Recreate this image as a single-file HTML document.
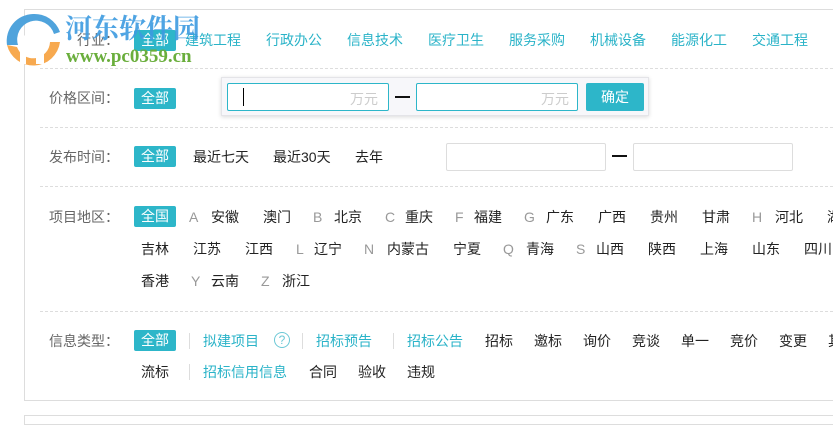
<!DOCTYPE html>
<html><head><meta charset="utf-8"><style>
*{margin:0;padding:0;box-sizing:border-box}
body{width:833px;height:418px;overflow:hidden;background:#fff;position:relative;font-family:"Liberation Sans","Noto Sans CJK SC",sans-serif;font-size:14px;color:#222}
.a{position:absolute;line-height:20px;white-space:nowrap}
.l{color:#666}
.t{color:#2ab3c8}
.g{color:#999}
.tag{position:absolute;background:#2db6c9;color:#fff;width:42px;height:21px;line-height:21px;text-align:center;border-radius:2px}
.dl{position:absolute;left:40px;right:0;border-top:1px dashed #ddd;height:0}
.sep{position:absolute;width:1px;height:16px;background:#ddd}
.in{position:absolute;border:1px solid #ddd;background:#fff;border-radius:2px}
</style></head><body>
<div style="position:absolute;left:24px;top:9px;width:820px;height:392px;border:1px solid #ddd;border-right:none"></div>
<div style="position:absolute;left:24px;top:415px;width:820px;height:10px;border:1px solid #ddd"></div>
<div class="dl" style="top:68px"></div>
<div class="dl" style="top:127px"></div>
<div class="dl" style="top:186px"></div>
<div class="dl" style="top:311px"></div>

<span class="a l" style="left:77px;top:30px">行业：</span>
<div class="tag" style="left:134px;top:30px">全部</div>
<span class="a t" style="left:185px;top:30px">建筑工程</span>
<span class="a t" style="left:266px;top:30px">行政办公</span>
<span class="a t" style="left:347px;top:30px">信息技术</span>
<span class="a t" style="left:428px;top:30px">医疗卫生</span>
<span class="a t" style="left:509px;top:30px">服务采购</span>
<span class="a t" style="left:590px;top:30px">机械设备</span>
<span class="a t" style="left:671px;top:30px">能源化工</span>
<span class="a t" style="left:752px;top:30px">交通工程</span>

<span class="a l" style="left:49px;top:88px">价格区间：</span>
<div class="tag" style="left:134px;top:88px">全部</div>
<div style="position:absolute;left:221px;top:77px;width:428px;height:39px;background:#f7f7fa;border:1px solid #e4e4e8;box-shadow:0 1px 4px rgba(0,0,0,.15)"></div>
<div class="in" style="left:227px;top:83px;width:162px;height:28px;border-color:#2db6c9"></div>
<div style="position:absolute;left:243px;top:88px;width:1px;height:18px;background:#000"></div>
<span class="a" style="left:350px;top:89px;color:#ccc">万元</span>
<div style="position:absolute;left:395px;top:96px;width:15px;height:2px;background:#111"></div>
<div class="in" style="left:416px;top:83px;width:162px;height:28px;border-color:#2db6c9"></div>
<span class="a" style="left:541px;top:89px;color:#ccc">万元</span>
<div style="position:absolute;left:586px;top:83px;width:58px;height:28px;background:#2db6c9;color:#fff;line-height:28px;text-align:center;border-radius:2px">确定</div>

<span class="a l" style="left:49px;top:147px">发布时间：</span>
<div class="tag" style="left:134px;top:146px">全部</div>
<span class="a" style="left:193px;top:147px">最近七天</span>
<span class="a" style="left:273px;top:147px">最近30天</span>
<span class="a" style="left:355px;top:147px">去年</span>
<div class="in" style="left:446px;top:143px;width:160px;height:28px"></div>
<div style="position:absolute;left:612px;top:155px;width:15px;height:2px;background:#111"></div>
<div class="in" style="left:633px;top:143px;width:160px;height:28px"></div>

<span class="a l" style="left:49px;top:207px">项目地区：</span>
<div class="tag" style="left:134px;top:206px">全国</div>
<span class="a g" style="left:189px;top:207px">A</span><span class="a" style="left:211px;top:207px">安徽</span>
<span class="a" style="left:263px;top:207px">澳门</span>
<span class="a g" style="left:313px;top:207px">B</span><span class="a" style="left:334px;top:207px">北京</span>
<span class="a g" style="left:385px;top:207px">C</span><span class="a" style="left:405px;top:207px">重庆</span>
<span class="a g" style="left:455px;top:207px">F</span><span class="a" style="left:474px;top:207px">福建</span>
<span class="a g" style="left:524px;top:207px">G</span><span class="a" style="left:546px;top:207px">广东</span>
<span class="a" style="left:598px;top:207px">广西</span>
<span class="a" style="left:650px;top:207px">贵州</span>
<span class="a" style="left:702px;top:207px">甘肃</span>
<span class="a g" style="left:752px;top:207px">H</span><span class="a" style="left:775px;top:207px">河北</span>
<span class="a" style="left:827px;top:207px">湖南</span>

<span class="a" style="left:141px;top:239px">吉林</span>
<span class="a" style="left:193px;top:239px">江苏</span>
<span class="a" style="left:245px;top:239px">江西</span>
<span class="a g" style="left:296px;top:239px">L</span><span class="a" style="left:314px;top:239px">辽宁</span>
<span class="a g" style="left:364px;top:239px">N</span><span class="a" style="left:387px;top:239px">内蒙古</span>
<span class="a" style="left:453px;top:239px">宁夏</span>
<span class="a g" style="left:503px;top:239px">Q</span><span class="a" style="left:526px;top:239px">青海</span>
<span class="a g" style="left:576px;top:239px">S</span><span class="a" style="left:596px;top:239px">山西</span>
<span class="a" style="left:648px;top:239px">陕西</span>
<span class="a" style="left:700px;top:239px">上海</span>
<span class="a" style="left:752px;top:239px">山东</span>
<span class="a" style="left:804px;top:239px">四川</span>

<span class="a" style="left:141px;top:271px">香港</span>
<span class="a g" style="left:191px;top:271px">Y</span><span class="a" style="left:211px;top:271px">云南</span>
<span class="a g" style="left:261px;top:271px">Z</span><span class="a" style="left:282px;top:271px">浙江</span>

<span class="a l" style="left:49px;top:331px">信息类型：</span>
<div class="tag" style="left:134px;top:330px">全部</div>
<div class="sep" style="left:189px;top:333px"></div>
<span class="a t" style="left:203px;top:331px">拟建项目</span>
<div style="position:absolute;left:274px;top:332px;width:16px;height:16px;border:1px solid #6cc8d6;border-radius:50%;color:#6cc8d6;font-size:12px;line-height:14px;text-align:center">?</div>
<div class="sep" style="left:302px;top:333px"></div>
<span class="a t" style="left:316px;top:331px">招标预告</span>
<div class="sep" style="left:393px;top:333px"></div>
<span class="a t" style="left:407px;top:331px">招标公告</span>
<span class="a" style="left:485px;top:331px">招标</span>
<span class="a" style="left:534px;top:331px">邀标</span>
<span class="a" style="left:583px;top:331px">询价</span>
<span class="a" style="left:632px;top:331px">竞谈</span>
<span class="a" style="left:681px;top:331px">单一</span>
<span class="a" style="left:730px;top:331px">竞价</span>
<span class="a" style="left:779px;top:331px">变更</span>
<span class="a" style="left:828px;top:331px">其他</span>
<span class="a" style="left:141px;top:362px">流标</span>
<div class="sep" style="left:189px;top:364px"></div>
<span class="a t" style="left:203px;top:362px">招标信用信息</span>
<span class="a" style="left:309px;top:362px">合同</span>
<span class="a" style="left:358px;top:362px">验收</span>
<span class="a" style="left:407px;top:362px">违规</span>

<svg style="position:absolute;left:4px;top:12px" width="58" height="56" viewBox="0 0 58 56">
<path d="M29 2 A27 27 0 0 0 3 33 L14 33 A16 16 0 0 1 50 22 L56 20 A27 27 0 0 0 29 2Z" fill="#4fa3dc"/>
<path d="M3 33 A27 27 0 0 0 56 30 L46 30 A17 17 0 0 1 13 35Z" fill="#f7a94f"/>
<path d="M16 28 L30 14 L44 24 L40 24 L40 52 L32 52 L32 28 L26 24 L22 28 L22 52 L16 52Z" fill="#fff"/>
<circle cx="24" cy="14" r="2.5" fill="#fff"/>
</svg>
<span class="a" style="left:65px;top:11px;font-size:27px;line-height:32px;font-weight:bold;color:#3d9be0;font-family:'Noto Serif CJK SC','Noto Sans CJK SC',serif;opacity:.9">河东软件园</span>
<span class="a" style="left:66px;top:46px;font-size:19px;line-height:22px;font-weight:bold;color:#6aae3c;font-family:'Liberation Serif',serif">www.pc0359.cn</span>
</body></html>
